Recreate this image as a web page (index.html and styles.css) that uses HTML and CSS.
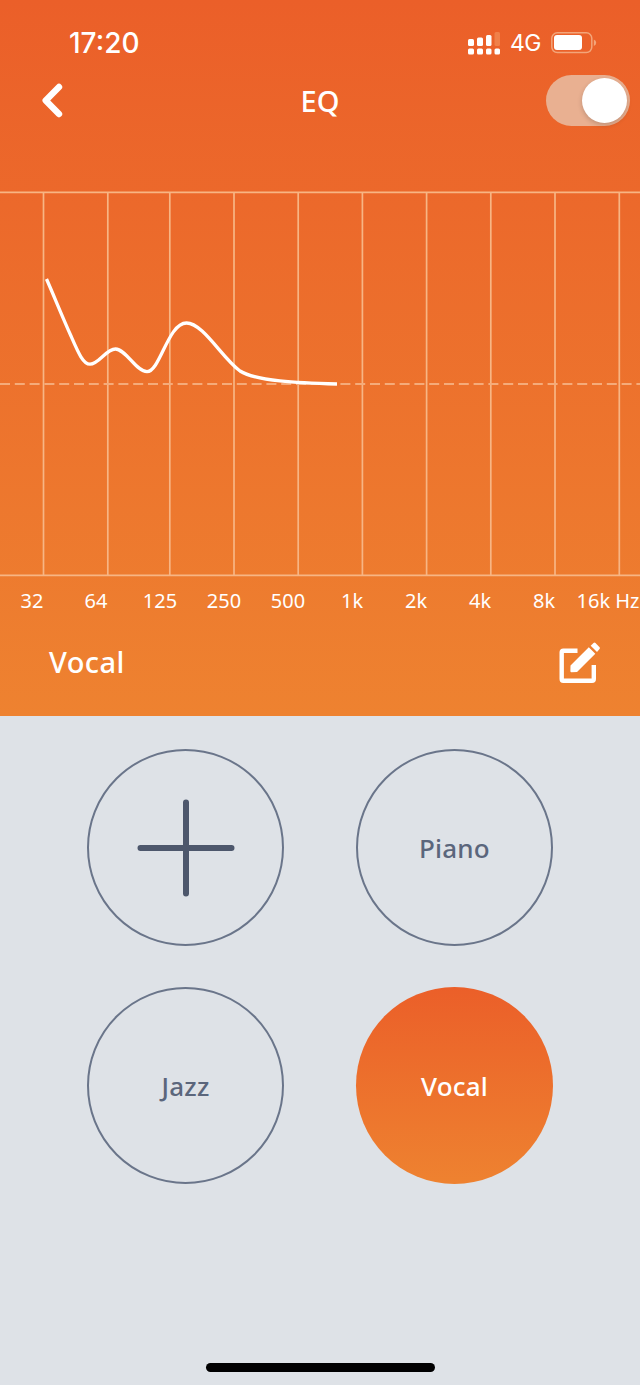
FILE: index.html
```html
<!DOCTYPE html>
<html lang="en">
<head>
    <meta charset="UTF-8">
    <meta name="viewport" content="width=device-width, initial-scale=1.0">
    <title>EQ</title>
    <link rel="stylesheet" href="styles.css">
</head>
<body>
    <section class="eq-panel">
        <div class="status-bar">
            <span class="time">17:20</span>
            <div class="status-icons">
                <svg class="signal" width="32" height="23" viewBox="0 0 32 23" fill="#fff">
                    <rect x="0" y="7" width="6" height="7" rx="1.5"/>
                    <rect x="9" y="5.5" width="6" height="8.5" rx="1.5"/>
                    <rect x="18" y="3" width="5.5" height="11" rx="1.5"/>
                    <rect x="26.5" y="0" width="5.5" height="14" rx="1.5" fill="#f08049"/>
                    <rect x="0" y="16.5" width="6" height="6" rx="1.5"/>
                    <rect x="9" y="16.5" width="6" height="6" rx="1.5"/>
                    <rect x="18" y="16.5" width="5.5" height="6" rx="1.5"/>
                    <rect x="26.5" y="16.5" width="5.5" height="6" rx="1.5"/>
                </svg>
                <span class="network">4G</span>
                <svg class="battery" width="46" height="22" viewBox="0 0 46 22">
                    <rect x="0.8" y="0.8" width="40" height="19.8" rx="5.5" fill="none" stroke="#f3a57a" stroke-width="1.5"/>
                    <rect x="3" y="3" width="28" height="15" rx="3" fill="#fff"/>
                    <path d="M42.8 7.5q2.4 1 2.4 3.2t-2.4 3.2z" fill="#f3a57a"/>
                </svg>
            </div>
        </div>

        <header class="nav-bar">
            <a class="back" href="#">
                <svg width="22" height="36" viewBox="0 0 22 36" fill="none" stroke="#fff" stroke-width="6.4" stroke-linecap="round" stroke-linejoin="round">
                    <path d="M17 5L3.700 18.500l13.300 13.500"/>
                </svg>
            </a>
            <h1>EQ</h1>
            <div class="toggle"><span class="knob"></span></div>
        </header>

        <svg class="chart" width="640" height="386" viewBox="0 0 640 386" fill="none">
            <g stroke="#f7b584" stroke-width="1.7">
                <path d="M0 1.4H640M0 384.3H640"/>
                <path d="M43.5 1.4V384M107.8 1.4V384M169.8 1.4V384M234 1.4V384M298.2 1.4V384M362.4 1.4V384M426.6 1.4V384M490.8 1.4V384M555 1.4V384M619.3 1.4V384"/>
            </g>
            <path d="M0 193H640" stroke="#f5ab7a" stroke-width="1.8" stroke-dasharray="10 4.8"/>
            <path d="M46.5 88C54 105 62 125 71 145C78 161 83 173.2 90 173.200C99 173.200 106 158 115.500 158C126 158 136 180.700 147 180.700C160 180.700 168 132 186.500 132C203 132 222 167 240 180C256 190 298 192 337 193" stroke="#fff" stroke-width="3.3"/>
        </svg>

        <div class="labels">
            <span>32</span>
            <span>64</span>
            <span>125</span>
            <span>250</span>
            <span>500</span>
            <span>1k</span>
            <span>2k</span>
            <span>4k</span>
            <span>8k</span>
            <span>16k Hz</span>
        </div>

        <div class="current">
            <h2>Vocal</h2>
            <a class="edit" href="#">
                <svg width="43" height="43" viewBox="0 0 43 43">
                    <path d="M20.500 8.700H6.300Q4.700 8.700 4.700 10.300V37Q4.700 38.700 6.300 38.700H35Q36.800 38.700 36.800 37V23" fill="none" stroke="#fff" stroke-width="4.400"/>
                    <path d="M13.500 25.500L31.800 7.200L38.300 13.700L20 32L14.500 32.300Q13.300 32.300 13.400 31z" transform="translate(0 -2)" fill="#fff"/>
                    <path d="M33.700 3.700L36.500 .9Q37.500 .1 38.500 .9L42.600 5.200Q43.200 6.100 42.500 7.100L40 10z" fill="#fff"/>
                </svg>
            </a>
        </div>
    </section>

    <main class="presets">
        <div class="preset">
            <svg width="98" height="98" viewBox="0 0 98 98" stroke="#4d576c" stroke-width="6" stroke-linecap="round">
                <path d="M49 3.500V94.500M3.500 49H94.500"/>
            </svg>
        </div>
        <div class="preset">Piano</div>
        <div class="preset">Jazz</div>
        <div class="preset active">Vocal</div>
    </main>

    <footer>
        <div class="home-indicator"></div>
    </footer>
</body>
</html>
```
FILE: styles.css
```css
* {
    box-sizing: border-box;
}

body {
    margin: 0;
    height: 1385px;
    display: flex;
    flex-direction: column;
    background-color: #dee2e7;
    font-family: "Noto Sans", "Open Sans", sans-serif;
    color: #5b667c;
}

svg {
    display: block;
}

h1,
h2 {
    margin: 0;
    font-weight: 500;
}

.eq-panel {
    height: 716px;
    background: linear-gradient(#eb5f29, #ee8230);
    color: white;
}

.status-bar {
    height: 74px;
    padding: 12px 43px 0 69px;
    display: flex;
    justify-content: space-between;
    align-items: center;
    font-family: Inter, sans-serif;
}

.time {
    font-size: 28px;
    font-weight: 550;
    line-height: 34px;
}

.status-icons {
    display: flex;
    align-items: center;
}

.network {
    margin: 0 10px 0 10px;
    font-size: 23px;
    line-height: 28px;
    letter-spacing: -0.5px;
}

.nav-bar {
    height: 52px;
    padding: 0 10px 0 42px;
    display: grid;
    grid-template-columns: 84px 1fr 84px;
    align-items: center;
}

.nav-bar h1 {
    padding: 2px 32px 0 0;
    font-size: 29px;
    line-height: 40px;
    text-align: center;
}

.toggle {
    width: 84px;
    height: 51px;
    padding: 3px;
    display: flex;
    justify-content: flex-end;
    border-radius: 26px;
    background-color: #e9b091;
}

.knob {
    width: 45px;
    height: 45px;
    border-radius: 50%;
    background-color: white;
    box-shadow: 0 2px 5px rgba(0, 0, 0, 0.18);
}

.chart {
    margin-top: 65px;
}

.labels {
    height: 46px;
    display: grid;
    grid-template-columns: repeat(10, 64px);
    align-items: center;
    font-size: 20px;
    text-align: center;
    white-space: nowrap;
}

.current {
    height: 78px;
    padding: 0 40px 0 49px;
    display: flex;
    justify-content: space-between;
    align-items: center;
}

.current h2 {
    font-size: 29px;
    line-height: 40px;
    letter-spacing: 0.4px;
}

.edit {
    padding-top: 3px;
}

.presets {
    padding: 33px 87px 0;
    display: grid;
    grid-template-columns: 197px 197px;
    gap: 41px 72px;
}

.preset {
    height: 197px;
    display: flex;
    justify-content: center;
    align-items: center;
    border: 2px solid #6a758a;
    border-radius: 50%;
    font-size: 26px;
    font-weight: 500;
    letter-spacing: 0.2px;
}

.active {
    border: none;
    background: linear-gradient(#eb5f29, #ee8230);
    color: white;
}

footer {
    margin-top: auto;
    padding-bottom: 13px;
}

.home-indicator {
    width: 229px;
    height: 9px;
    margin: 0 auto;
    border-radius: 5px;
    background-color: black;
}
```
